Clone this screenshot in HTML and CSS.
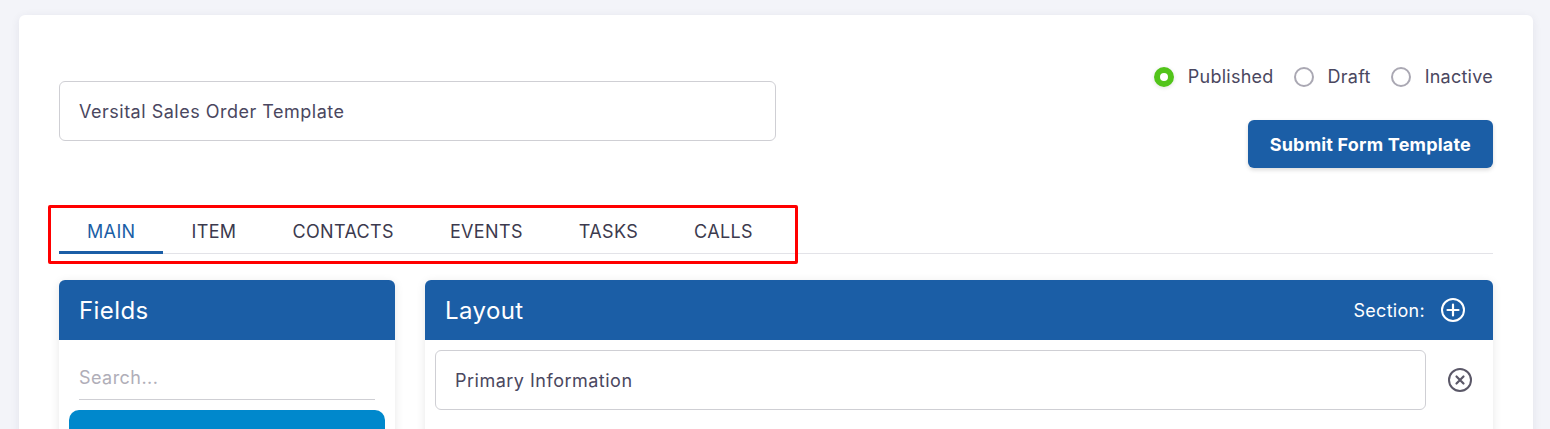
FILE: index.html
```html
<!DOCTYPE html>
<html lang="en">
<head>
    <meta charset="UTF-8">
    <meta name="viewport" content="width=device-width, initial-scale=1.0">
    <title>Form Template Builder</title>
    <link rel="stylesheet" href="styles.css">
</head>
<body>
    <div class="card">
        <div class="top-row">
            <input class="title-input" type="text" value="Versital Sales Order Template">
            <div class="top-actions">
                <div class="status">
                    <label class="radio checked"><span class="dot"></span> Published</label>
                    <label class="radio"><span class="dot"></span> Draft</label>
                    <label class="radio"><span class="dot"></span> Inactive</label>
                </div>
                <button class="submit-btn">Submit Form Template</button>
            </div>
        </div>

        <div class="tabs">
            <div class="highlight"></div>
            <div class="tab active">MAIN</div>
            <div class="tab">ITEM</div>
            <div class="tab">CONTACTS</div>
            <div class="tab">EVENTS</div>
            <div class="tab">TASKS</div>
            <div class="tab">CALLS</div>
        </div>

        <div class="panels">
            <div class="panel">
                <div class="panel-head">Fields</div>
                <div class="fields-body">
                    <input class="search" type="text" placeholder="Search...">
                    <div class="field-item"></div>
                </div>
            </div>
            <div class="panel">
                <div class="panel-head">
                    <span>Layout</span>
                    <span class="section-add">Section:
                        <svg width="26" height="26" viewBox="0 0 26 26">
                            <circle cx="13" cy="13" r="11" fill="none" stroke="#fff" stroke-width="2"/>
                            <path d="M13 7.5v11M7.5 13h11" stroke="#fff" stroke-width="2.2" stroke-linecap="round"/>
                        </svg>
                    </span>
                </div>
                <div class="layout-body">
                    <div class="section-row">
                        <input class="section-input" type="text" value="Primary Information">
                        <div class="remove">
                            <svg width="26" height="26" viewBox="0 0 26 26">
                                <circle cx="13" cy="13" r="11" fill="none" stroke="#5b5868" stroke-width="2"/>
                                <path d="M9.5 9.5l7 7M16.5 9.5l-7 7" stroke="#5b5868" stroke-width="2.2" stroke-linecap="round"/>
                            </svg>
                        </div>
                    </div>
                </div>
            </div>
        </div>
    </div>
</body>
</html>
```

FILE: styles.css
```css
body {
    margin: 0;
    padding: 15px 17px 0 19px;
    background-color: #f3f4f9;
    font-family: Inter, "Noto Sans", sans-serif;
    color: #4a4760;
    overflow: hidden;
}

.card {
    background-color: #fff;
    border-radius: 6px;
    box-shadow: 0 2px 10px rgba(40, 40, 80, 0.08);
    padding: 50px 40px 40px;
    min-height: 500px;
}

.top-row {
    display: flex;
    justify-content: space-between;
    align-items: flex-start;
}

.title-input {
    width: 717px;
    height: 60px;
    box-sizing: border-box;
    margin-top: 16px;
    padding: 0 19px;
    border: 1px solid #cfcfd4;
    border-radius: 6px;
    font-family: inherit;
    font-size: 18px;
    letter-spacing: 0.5px;
    color: #4a4760;
    outline: none;
}

.top-actions {
    display: flex;
    flex-direction: column;
    align-items: flex-end;
}

.status {
    display: flex;
    gap: 20px;
    line-height: 24px;
    font-size: 18px;
    letter-spacing: 0.25px;
}

.radio {
    display: flex;
    align-items: center;
    gap: 14px;
}

.radio .dot {
    width: 20px;
    height: 20px;
    box-sizing: border-box;
    border: 2px solid #aaa8b3;
    border-radius: 50%;
}

.radio.checked .dot {
    border: 6px solid #52c41a;
    box-shadow: 0 1px 4px rgba(0, 0, 0, 0.12);
}

.submit-btn {
    margin-top: 31px;
    height: 48px;
    padding: 0 22px;
    border: none;
    border-radius: 6px;
    background-color: #1b5ea6;
    color: #fff;
    font-family: inherit;
    font-size: 18px;
    font-weight: 700;
    letter-spacing: 0.2px;
    box-shadow: 0 2px 4px rgba(0, 0, 0, 0.15);
}

/* Tabs */
.tabs {
    position: relative;
    display: flex;
    margin-top: 41px;
    border-bottom: 1px solid #e3e3e8;
}

.tab {
    padding: 12px 28px 8px;
    line-height: 22px;
    font-size: 18px;
    letter-spacing: 0.35px;
    color: #3c3a4e;
    border-bottom: 3px solid transparent;
    margin-bottom: -1px;
}

.tab.active {
    color: #1b5ea6;
    border-bottom-color: #1b5ea6;
}

.highlight {
    position: absolute;
    top: -4px;
    left: -11px;
    width: 750px;
    height: 59px;
    box-sizing: border-box;
    border: 3px solid #ff0000;
    border-radius: 2px;
    pointer-events: none;
}

/* Panels */
.panels {
    display: grid;
    grid-template-columns: 336px 1fr;
    gap: 30px;
    margin-top: 26px;
}

.panel {
    border-radius: 6px;
    box-shadow: 0 2px 10px rgba(0, 0, 0, 0.1);
    min-height: 200px;
}

.panel-head {
    display: flex;
    justify-content: space-between;
    align-items: center;
    height: 60px;
    padding: 0 27px 0 20px;
    background-color: #1b5ea6;
    border-radius: 6px 6px 0 0;
    color: #fff;
    font-size: 24px;
    letter-spacing: 0.4px;
}

.section-add {
    display: flex;
    align-items: center;
    gap: 15px;
    font-size: 18px;
    letter-spacing: 0.3px;
}

.fields-body {
    padding: 10px;
}

.search {
    display: block;
    width: calc(100% - 20px);
    box-sizing: border-box;
    margin: 0 10px;
    padding: 17px 0 10px;
    line-height: 22px;
    border: none;
    border-bottom: 1px solid #cfcfd4;
    font-family: inherit;
    font-size: 18px;
    letter-spacing: 0.45px;
    outline: none;
}

.search::placeholder {
    color: #b0aeb8;
}

.field-item {
    margin-top: 10px;
    height: 50px;
    border-radius: 10px;
    background-color: #0088cc;
}

.layout-body {
    padding: 10px 0 10px 10px;
}

.section-row {
    display: flex;
    align-items: center;
}

.section-input {
    flex: 1;
    height: 60px;
    box-sizing: border-box;
    padding: 0 19px;
    border: 1px solid #cfcfd4;
    border-radius: 6px;
    font-family: inherit;
    font-size: 18px;
    letter-spacing: 0.5px;
    color: #4a4760;
    outline: none;
}

.remove {
    width: 67px;
    display: flex;
    justify-content: center;
}
```
